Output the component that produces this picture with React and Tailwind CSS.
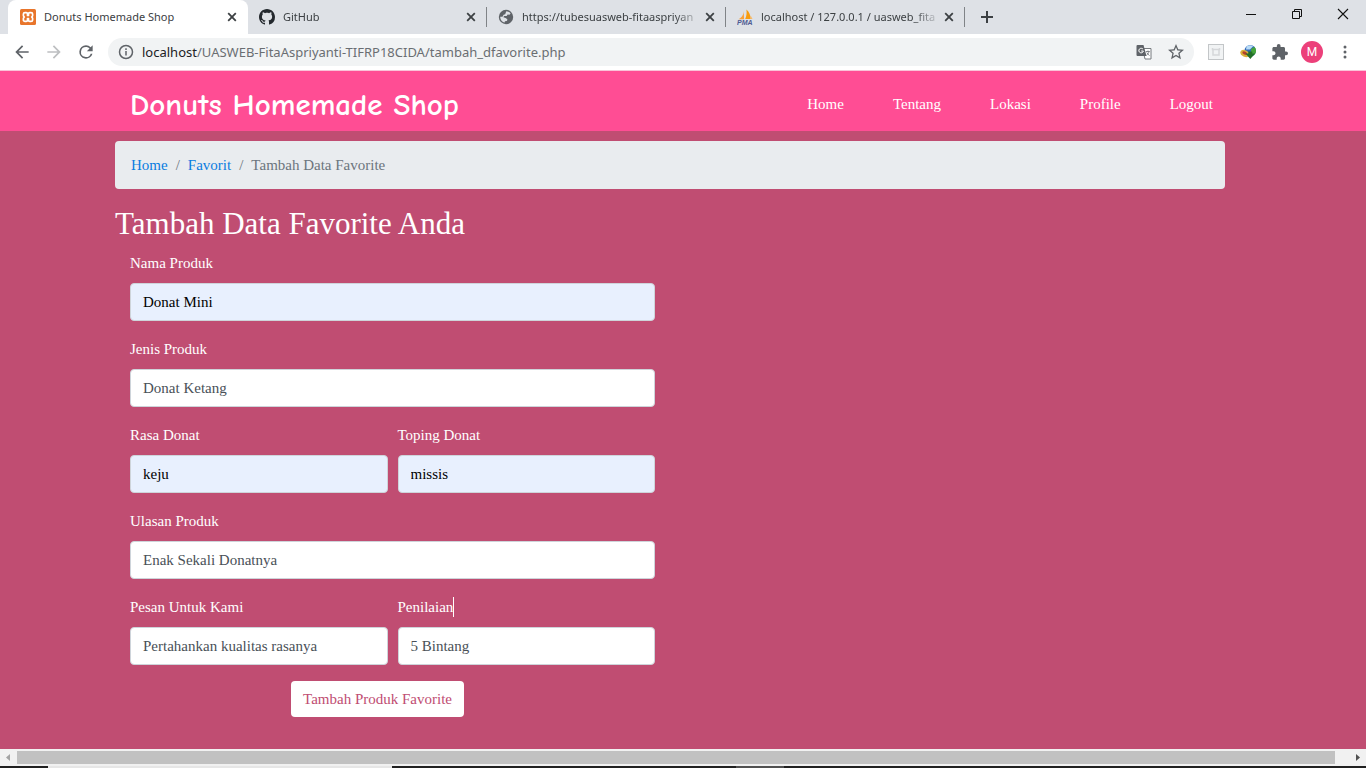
import React from "react";

const tabs = [
  { id: "donuts", title: "Donuts Homemade Shop", icon: "xampp", active: true },
  { id: "github", title: "GitHub", icon: "github" },
  { id: "tubes", title: "https://tubesuasweb-fitaaspriyan", icon: "globe" },
  { id: "pma", title: "localhost / 127.0.0.1 / uasweb_fita", icon: "pma" },
];

const navLinks = ["Home", "Tentang", "Lokasi", "Profile", "Logout"];

function TabIcon({ name }) {
  if (name === "xampp") {
    return (
      <svg className="size-4 shrink-0" viewBox="0 0 16 16" aria-hidden="true">
        <rect width="16" height="16" rx="1.500" fill="#e8752b" />
        <path
          d="M5 3.600h1.200c1 0 1.300.6 1.300 1.400v1.400h1V5c0-.8.3-1.400 1.300-1.400H11c1 0 1.600.6 1.600 1.500v1.400c0 .8-.4 1.200-.9 1.500.5.3.9.7.9 1.500v1.400c0 .9-.6 1.500-1.600 1.500H9.800c-1 0-1.300-.6-1.300-1.400V9.600h-1V11c0 .8-.3 1.400-1.300 1.400H5c-1 0-1.600-.6-1.600-1.500V9.500c0-.8.4-1.200.9-1.500-.5-.3-.9-.7-.9-1.500V5.100c0-.9.6-1.500 1.600-1.500z"
          fill="none"
          stroke="#fff"
          strokeWidth="1.700"
          strokeLinejoin="round"
        />
      </svg>
    );
  }
  if (name === "github") {
    return (
      <svg className="size-4 shrink-0" viewBox="0 0 16 16" fill="#24292e" aria-hidden="true">
        <path d="M8 0C3.58 0 0 3.58 0 8c0 3.54 2.29 6.53 5.47 7.59.4.07.55-.17.55-.38 0-.19-.01-.82-.01-1.49-2.01.37-2.53-.49-2.69-.94-.09-.23-.48-.94-.82-1.13-.28-.15-.68-.52-.01-.53.63-.01 1.08.58 1.23.82.72 1.21 1.87.87 2.33.66.07-.52.28-.87.51-1.07-1.78-.2-3.64-.89-3.64-3.95 0-.87.31-1.59.82-2.15-.08-.2-.36-1.02.08-2.12 0 0 .67-.21 2.2.82.64-.18 1.32-.27 2-.27s1.36.09 2 .27c1.530-1.040 2.200-.820 2.200-.820.440 1.100.160 1.920.080 2.120.510.560.820 1.270.820 2.150 0 3.070-1.870 3.750-3.650 3.950.290.250.540.730.540 1.480 0 1.070-.010 1.930-.010 2.200 0 .210.150.460.550.380A8.010 8.010 0 0 0 16 8c0-4.420-3.580-8-8-8z" />
      </svg>
    );
  }
  if (name === "globe") {
    return (
      <svg className="size-4 shrink-0" viewBox="0 0 16 16" aria-hidden="true">
        <circle cx="8" cy="8" r="7.200" fill="#5f6368" />
        <path d="M7.500 2.300c1.800-.2 3.500.5 4.600 1.700l-1 1.400H9.300L8.500 7 6 7.300l-.6 1.200 2.900.7 1.600 1.300-.6 1.400-1.800.5v1.300C5 13.500 2.500 11.500 2.200 8.500l2.300-.2.800-2.200 1.500-.8z" fill="#dee1e6" transform="rotate(8 8 8)" />
        <path d="M9.200 7.600h4.600c0 1-.3 2-.8 2.800l-1.700-.5z" fill="#5f6368" />
      </svg>
    );
  }
  return (
    <svg className="size-4 shrink-0" viewBox="0 0 16 16" aria-hidden="true">
      <path d="M6.700 1.500C6.900 4.500 5.500 8.500 1.500 10.300h5.600z" fill="#f9a13a" />
      <path d="M9.400 0.500c3 2.500 4.300 6 4.300 9.500H8.200c1.400-3 1.700-6.500 1.200-9.500z" fill="#f89c0e" />
      <path d="M13.600 6.500l1.900 3.500h-1.800z" fill="#f9b868" />
      <text x="0" y="15.500" fontFamily="Liberation Sans, sans-serif" fontSize="7" fontWeight="700" fontStyle="italic" fill="#4f5b93">PMA</text>
    </svg>
  );
}

function Close() {
  return (
    <svg className="size-4" viewBox="0 0 16 16" fill="none" stroke="#3c4043" strokeWidth="1.800" aria-hidden="true">
      <path d="M4.200 4.200l7.600 7.600M11.800 4.200l-7.600 7.600" />
    </svg>
  );
}

function Tab({ tab }) {
  return (
    <div
      className={
        tab.active
          ? "flex h-[34px] w-60 shrink-0 items-center rounded-t-lg bg-white pl-3 pr-1"
          : "flex h-[34px] w-[239px] shrink-0 items-center pl-[11px]"
      }
    >
      <TabIcon name={tab.icon} />
      <span
        className={
          tab.active
            ? "ml-2 flex-1 whitespace-nowrap text-[11px] text-[#3c4043]"
            : "ml-2 flex-1 whitespace-nowrap text-[11px] text-[#3c4043] mask-r-from-85%"
        }
      >
        {tab.title}
      </span>
      <button type="button" aria-label={"Close " + tab.title} className={tab.active ? "mr-1 flex" : "mr-[7px] flex"}>
        <Close />
      </button>
      {!tab.active && <span className="h-5 w-px bg-[#808387]" />}
    </div>
  );
}

function Browser() {
  return (
    <header className="font-['Noto_Sans',sans-serif]">
      <div className="flex h-[34px] items-center bg-[#dee1e6] pl-2">
        {tabs.map((tab) => (
          <Tab key={tab.id} tab={tab} />
        ))}
        <button type="button" aria-label="New tab" className="ml-3.5 flex">
          <svg className="size-4" viewBox="0 0 16 16" fill="none" stroke="#3c4043" strokeWidth="2" aria-hidden="true">
            <path d="M8 2v12M2 8h12" />
          </svg>
        </button>
        <div className="ml-auto flex gap-[30px] pb-1.5 pr-[15px]">
          <button type="button" aria-label="Minimize">
            <svg className="size-4" viewBox="0 0 16 16" stroke="#111" aria-hidden="true">
              <path d="M3 8.500h10" />
            </svg>
          </button>
          <button type="button" aria-label="Restore">
            <svg className="size-4" viewBox="0 0 16 16" fill="none" stroke="#111" aria-hidden="true">
              <path d="M3.500 5.500h7v7h-7zM5.500 5.500v-2h7v7h-2" />
            </svg>
          </button>
          <button type="button" aria-label="Close window">
            <svg className="size-4" viewBox="0 0 16 16" stroke="#111" strokeWidth="1.100" aria-hidden="true">
              <path d="M3 3l10 10M13 3L3 13" />
            </svg>
          </button>
        </div>
      </div>
      <div className="flex h-9 items-center bg-white pl-3 pr-[13px]">
        <div className="flex gap-3">
          <button type="button" aria-label="Back">
            <svg className="size-5" viewBox="0 0 24 24" fill="#5f6368" aria-hidden="true">
              <path d="M20 11H7.830l5.590-5.590L12 4l-8 8 8 8 1.410-1.410L7.830 13H20v-2z" />
            </svg>
          </button>
          <button type="button" aria-label="Forward">
            <svg className="size-5" viewBox="0 0 24 24" fill="#bdbfc1" aria-hidden="true">
              <path d="M12 4l-1.410 1.410L16.170 11H4v2h12.170l-5.580 5.590L12 20l8-8z" />
            </svg>
          </button>
          <button type="button" aria-label="Reload">
            <svg className="size-5" viewBox="0 0 24 24" fill="#5f6368" aria-hidden="true">
              <path d="M17.650 6.350A7.958 7.958 0 0 0 12 4a8 8 0 1 0 7.730 10h-2.080A6 6 0 1 1 12 6c1.660 0 3.140.690 4.220 1.780L13 11h7V4l-2.350 2.350z" />
            </svg>
          </button>
        </div>
        <div className="ml-3 flex h-7 flex-1 items-center rounded-full bg-[#f1f3f4] pl-2.5 pr-2.5">
          <svg className="size-4 shrink-0" viewBox="0 0 16 16" fill="none" stroke="#5f6368" strokeWidth="1.500" aria-hidden="true">
            <circle cx="8" cy="8" r="6.500" />
            <path d="M8 7v4.500M8 4.300v1.600" />
          </svg>
          <p className="ml-2 flex-1 whitespace-nowrap text-[13px] text-[#6a6e72]">
            <span className="text-[#202124]">localhost</span>/UASWEB-FitaAspriyanti-TIFRP18CIDA/tambah_dfavorite.php
          </p>
          <div className="flex gap-4">
            <button type="button" aria-label="Translate this page">
              <svg className="size-4" viewBox="0 0 16 16" aria-hidden="true">
                <path d="M6.500 4.500h8.500v10.500H9z" fill="#fff" stroke="#777b7f" />
                <path d="M1.500 1h6l3 11h-9a1 1 0 0 1-1-1V2a1 1 0 0 1 1-1z" fill="#5f6368" />
                <path d="M7 5.200A2.300 2.300 0 1 0 7.400 7H5.200" fill="none" stroke="#fff" strokeWidth="1" />
                <path d="M9.800 7.500h4M12 6.500v1M13 7.500c-.4 1.800-1.400 3-2.500 3.800M10.800 8.500c.5 1.200 1.500 2.200 2.700 3" fill="none" stroke="#777b7f" strokeWidth=".9" />
              </svg>
            </button>
            <button type="button" aria-label="Bookmark this page">
              <svg className="size-4" viewBox="2 2 20 20" fill="#5f6368" aria-hidden="true">
                <path d="M22 9.240l-7.190-.620L12 2 9.190 8.630 2 9.240l5.460 4.730L5.820 21 12 17.270 18.180 21l-1.630-7.030L22 9.240zM12 15.400l-3.760 2.270 1-4.280-3.320-2.880 4.380-.380L12 6.100l1.710 4.040 4.380.380-3.320 2.880 1 4.280L12 15.400z" />
              </svg>
            </button>
          </div>
        </div>
        <div className="ml-[14px] flex items-center gap-4">
          <button type="button" aria-label="Extension">
            <svg className="size-4" viewBox="0 0 16 16" fill="none" aria-hidden="true">
              <rect x=".5" y=".5" width="15" height="15" fill="#f1f3f4" stroke="#c3c6c8" />
              <path d="M4.500 4v1.500h7V4M5 5.500v5.500h6V5.500" stroke="#d5d7d9" strokeWidth="1.500" />
            </svg>
          </button>
          <button type="button" aria-label="Download manager">
            <svg className="size-4" viewBox="0 0 16 16" aria-hidden="true">
              <circle cx="10.200" cy="6.800" r="5.800" fill="#2f66b8" />
              <path d="M6.500 2.600c2-1.700 4.800-1.800 6.600-.3L10 5.500 6 5.500z" fill="#b9dcf6" />
              <path d="M11 5l3.500-2.200c1.800 2 2 5 .6 7.200L11 13z" fill="#46a53a" />
              <ellipse cx="4.800" cy="9.500" rx="4.700" ry="3.200" transform="rotate(25 4.800 9.500)" fill="#d9b13b" />
              <ellipse cx="4.800" cy="9.200" rx="2.600" ry="1.500" transform="rotate(25 4.800 9.200)" fill="#b5402a" />
              <path d="M5.500 9.500h2.800V7.500h4v2h2.700L10.300 15z" fill="#237028" />
            </svg>
          </button>
          <button type="button" aria-label="Extensions">
            <svg className="size-4" viewBox="1.500 1 21.500 21.500" fill="#5f6368" aria-hidden="true">
              <path d="M20.500 11H19V7c0-1.100-.9-2-2-2h-4V3.500a2.500 2.500 0 0 0-5 0V5H4c-1.100 0-1.990.9-1.990 2v3.800H3.500c1.490 0 2.700 1.210 2.700 2.700s-1.210 2.700-2.700 2.700H2V20c0 1.100.9 2 2 2h3.800v-1.500c0-1.490 1.210-2.700 2.700-2.700s2.700 1.210 2.700 2.700V22H17c1.100 0 2-.9 2-2v-4h1.500a2.500 2.500 0 0 0 0-5z" />
            </svg>
          </button>
        </div>
        <button type="button" aria-label="Profile" className="ml-[13px] flex size-[22px] items-center justify-center rounded-full bg-[#ec407a] font-[Roboto,sans-serif] text-xs text-white">
          M
        </button>
        <button type="button" aria-label="Menu" className="ml-[14px]">
          <svg className="size-4" viewBox="0 0 16 16" fill="#5f6368" aria-hidden="true">
            <circle cx="8" cy="3" r="1.500" />
            <circle cx="8" cy="8" r="1.500" />
            <circle cx="8" cy="13" r="1.500" />
          </svg>
        </button>
      </div>
    </header>
  );
}

function Field({ id, label, value, filled, caret }) {
  return (
    <div className="flex min-w-0 flex-1 flex-col gap-2">
      <label htmlFor={id} className="flex self-start">
        {label}
        {caret && <span className="h-5 w-px self-center bg-white" />}
      </label>
      <input
        id={id}
        type="text"
        defaultValue={value}
        className={
          filled
            ? "h-[38px] w-full rounded border border-[#ced4da] bg-[#e8f0fe] px-3 text-black"
            : "h-[38px] w-full rounded border border-[#ced4da] bg-white px-3 text-[#495057]"
        }
      />
    </div>
  );
}

export default function App() {
  return (
    <div className="flex min-h-screen flex-col overflow-hidden bg-[#c04d72] font-['Liberation_Serif',serif] text-[15px] leading-6 text-white">
      <Browser />
      <nav className="border-t border-[#f9c3d8] bg-[#ff4d94] pr-[26px]">
        <div className="mx-auto flex h-[60px] max-w-[1140px] items-center justify-between pl-[30px] pr-[27px]">
          <a href="#home" className="pt-2 font-['Comic_Sans_MS','Comic_Neue','Noto_Sans',sans-serif] text-[31px] font-bold leading-9">
            Donuts Homemade Shop
          </a>
          <div className="flex gap-[49px] pt-1.5">
            {navLinks.map((link) => (
              <a key={link} href={"#" + link.toLowerCase()}>{link}</a>
            ))}
          </div>
        </div>
      </nav>
      <main className="flex-1 pr-[26px]">
        <div className="mx-auto max-w-[1140px] px-[15px] pt-2.5">
          <ol className="flex gap-2 rounded bg-[#e9ecef] px-4 py-3 text-[#6c757d]">
            <li><a href="#home" className="text-[#0a7de0]">Home</a></li>
            <li aria-hidden="true">/</li>
            <li><a href="#favorit" className="text-[#0a7de0]">Favorit</a></li>
            <li aria-hidden="true">/</li>
            <li>Tambah Data Favorite</li>
          </ol>
          <h1 className="mb-2 mt-4 text-[31px] leading-[38px]">Tambah Data Favorite Anda</h1>
          <form className="w-[540px]">
            <div className="flex flex-col gap-4 pl-[15px]">
              <Field id="nama" label="Nama Produk" value="Donat Mini" filled />
              <Field id="jenis" label="Jenis Produk" value="Donat Ketang" />
              <div className="flex gap-2.5">
                <Field id="rasa" label="Rasa Donat" value="keju" filled />
                <Field id="toping" label="Toping Donat" value="missis" filled />
              </div>
              <Field id="ulasan" label="Ulasan Produk" value="Enak Sekali Donatnya" />
              <div className="flex gap-2.5">
                <Field id="pesan" label="Pesan Untuk Kami" value="Pertahankan kualitas rasanya" />
                <Field id="penilaian" label="Penilaian" value="5 Bintang" caret />
              </div>
            </div>
            <div className="mt-4 flex justify-center pr-[15px]">
              <button type="button" className="rounded bg-white px-3 py-1.5 text-[#c04d72]">
                Tambah Produk Favorite
              </button>
            </div>
          </form>
        </div>
      </main>
      <div className="flex h-[17px] items-center bg-[#f1f1f1]">
        <svg className="h-[17px] w-[17px]" viewBox="0 0 17 17" fill="#a3a3a3" aria-hidden="true">
          <path d="M10 5v7L6 8.500z" />
        </svg>
        <div className="h-[13px] flex-1 bg-[#c1c1c1]" />
        <svg className="ml-[14px] h-[17px] w-[17px]" viewBox="0 0 17 17" fill="#505050" aria-hidden="true">
          <path d="M7 5v7l4-3.500z" />
        </svg>
      </div>
      <div className="flex h-0.5 bg-[#202020]">
        <div className="ml-12 w-[344px] bg-[#e6e6e6]" />
        <div className="ml-[344px] w-12 bg-[#505050]" />
      </div>
    </div>
  );
}
